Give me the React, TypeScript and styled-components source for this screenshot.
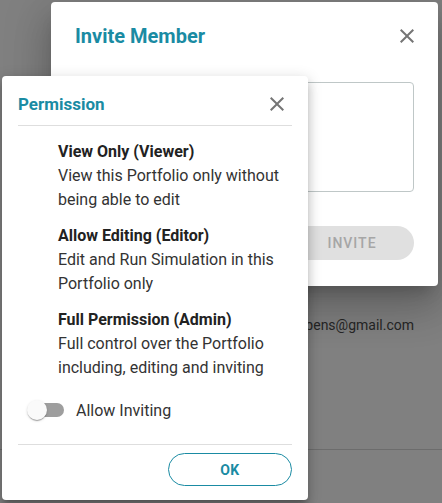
import React, { FC, useState } from 'react';
import styled, { createGlobalStyle } from 'styled-components';

const teal = '#1a8ba3';

const GlobalStyle = createGlobalStyle`
  * { box-sizing: border-box; }
  html, body { margin: 0; padding: 0; }
  body {
    font-family: Roboto, 'Liberation Sans', Arial, sans-serif;
    background: #808080;
    overflow: hidden;
  }
`;

const Page = styled.div`
  position: relative;
  width: 442px;
  height: 503px;
  background: #808080;
  overflow: hidden;
`;

const PageContent = styled.div`
  display: flex;
  flex-direction: column;
  padding-top: 313px;
`;

const MemberRow = styled.div`
  display: flex;
  justify-content: flex-end;
  padding-right: 28px;
  font-size: 14px;
  line-height: 24px;
  color: #262626;
  height: 136px;
`;

const PageRule = styled.div`
  height: 1px;
  background: #6c6c6c;
`;

const InviteDialog = styled.div`
  position: absolute;
  left: 51px;
  top: 2px;
  width: 387px;
  height: 284px;
  background: #fff;
  border-radius: 4px;
  padding: 20px 24px 0 24px;
  display: flex;
  flex-direction: column;
  box-shadow: 0 11px 15px -7px rgba(0, 0, 0, 0.2),
    0 24px 38px 3px rgba(0, 0, 0, 0.14), 0 9px 46px 8px rgba(0, 0, 0, 0.12);
`;

const DialogHeader = styled.div<{ $height: number; $top: number }>`
  display: flex;
  align-items: center;
  justify-content: space-between;
  height: ${(p) => p.$height}px;
  padding-top: ${(p) => p.$top}px;
  flex-shrink: 0;
`;

const Title = styled.h2<{ $size: number }>`
  margin: 0;
  font-size: ${(p) => p.$size}px;
  font-weight: 700;
  color: ${teal};
`;

const CloseButton = styled.button<{ $offset: number }>`
  border: 0;
  background: none;
  padding: 0;
  width: 24px;
  height: 24px;
  margin-right: ${(p) => p.$offset}px;
  display: flex;
  align-items: center;
  justify-content: center;
  color: #757575;
  cursor: pointer;
`;

const MessageBox = styled.div`
  margin-top: 32px;
  height: 110px;
  border: 1px solid #bfc7c7;
  border-radius: 4px;
`;

const InviteRow = styled.div`
  display: flex;
  justify-content: flex-end;
  margin-top: 34px;
`;

const InviteButton = styled.button`
  width: 124px;
  height: 34px;
  border: 0;
  border-radius: 17px;
  background: #e0e0e0;
  color: #a6a6a6;
  font-family: inherit;
  font-size: 14px;
  font-weight: 500;
  letter-spacing: 1px;
  padding: 0;
`;

const PermissionDialog = styled.div`
  position: absolute;
  left: 2px;
  top: 76px;
  width: 306px;
  height: 424px;
  background: #fff;
  border-radius: 4px;
  padding: 0 16px;
  display: flex;
  flex-direction: column;
  box-shadow: 0 5px 5px -3px rgba(0, 0, 0, 0.2),
    0 8px 10px 1px rgba(0, 0, 0, 0.14), 0 3px 14px 2px rgba(0, 0, 0, 0.12);
`;

const Divider = styled.div`
  height: 1px;
  background: #dedede;
  flex-shrink: 0;
`;

const OptionList = styled.div`
  display: flex;
  flex-direction: column;
  gap: 12px;
  padding: 14px 0 0 40px;
`;

const Option = styled.div`
  display: flex;
  flex-direction: column;
`;

const OptionTitle = styled.div`
  font-size: 16px;
  line-height: 24px;
  font-weight: 700;
  color: #222;
`;

const OptionText = styled.div`
  font-size: 16px;
  line-height: 24px;
  color: #333;
`;

const SwitchRow = styled.label`
  display: flex;
  align-items: center;
  height: 24px;
  margin: 18px 0 22px 9px;
  gap: 12px;
  font-size: 16px;
  color: #333;
  cursor: pointer;
`;

const SwitchTrack = styled.span<{ $on: boolean }>`
  position: relative;
  width: 34px;
  height: 14px;
  margin-left: 3px;
  border-radius: 7px;
  background: ${(p) => (p.$on ? '#8cc5d1' : '#9e9e9e')};
`;

const SwitchThumb = styled.span<{ $on: boolean }>`
  position: absolute;
  top: -3px;
  left: ${(p) => (p.$on ? '17px' : '-3px')};
  width: 20px;
  height: 20px;
  border-radius: 50%;
  background: ${(p) => (p.$on ? teal : '#fafafa')};
  box-shadow: 0 2px 1px -1px rgba(0, 0, 0, 0.2),
    0 1px 1px 0 rgba(0, 0, 0, 0.14), 0 1px 3px 0 rgba(0, 0, 0, 0.12);
  transition: left 150ms;
`;

const Footer = styled.div`
  display: flex;
  justify-content: flex-end;
  padding-top: 8px;
`;

const OkButton = styled.button`
  width: 124px;
  height: 33px;
  border: 1px solid ${teal};
  border-radius: 17px;
  background: #fff;
  color: ${teal};
  font-family: inherit;
  font-size: 14px;
  font-weight: 700;
  letter-spacing: 0.5px;
  cursor: pointer;
`;

const CloseIcon: FC = () => (
  <svg width='24' height='24' viewBox='0 0 24 24' fill='currentColor'>
    <path d='M19 6.41L17.59 5 12 10.59 6.41 5 5 6.41 10.59 12 5 17.59 6.41 19 12 13.41 17.59 19 19 17.59 13.41 12z' />
  </svg>
);

const options = [
  {
    title: 'View Only (Viewer)',
    lines: ['View this Portfolio only without', 'being able to edit'],
  },
  {
    title: 'Allow Editing (Editor)',
    lines: ['Edit and Run Simulation in this', 'Portfolio only'],
  },
  {
    title: 'Full Permission (Admin)',
    lines: ['Full control over the Portfolio', 'including, editing and inviting'],
  },
];

const App: FC = () => {
  const [allowInviting, setAllowInviting] = useState(false);

  return (
    <>
      <GlobalStyle />
      <Page>
        <PageContent>
          <MemberRow>stevenrubens@gmail.com</MemberRow>
          <PageRule />
        </PageContent>

        <InviteDialog>
          <DialogHeader $height={28} $top={0}>
            <Title $size={20}>Invite Member</Title>
            <CloseButton $offset={-5}>
              <CloseIcon />
            </CloseButton>
          </DialogHeader>
          <MessageBox />
          <InviteRow>
            <InviteButton disabled>INVITE</InviteButton>
          </InviteRow>
        </InviteDialog>

        <PermissionDialog>
          <DialogHeader $height={49} $top={7}>
            <Title $size={17}>Permission</Title>
            <CloseButton $offset={3}>
              <CloseIcon />
            </CloseButton>
          </DialogHeader>
          <Divider />
          <OptionList>
            {options.map((o) => (
              <Option key={o.title}>
                <OptionTitle>{o.title}</OptionTitle>
                {o.lines.map((l) => (
                  <OptionText key={l}>{l}</OptionText>
                ))}
              </Option>
            ))}
          </OptionList>
          <SwitchRow onClick={() => setAllowInviting(!allowInviting)}>
            <SwitchTrack $on={allowInviting}>
              <SwitchThumb $on={allowInviting} />
            </SwitchTrack>
            Allow Inviting
          </SwitchRow>
          <Divider />
          <Footer>
            <OkButton>OK</OkButton>
          </Footer>
        </PermissionDialog>
      </Page>
    </>
  );
};

export default App;
